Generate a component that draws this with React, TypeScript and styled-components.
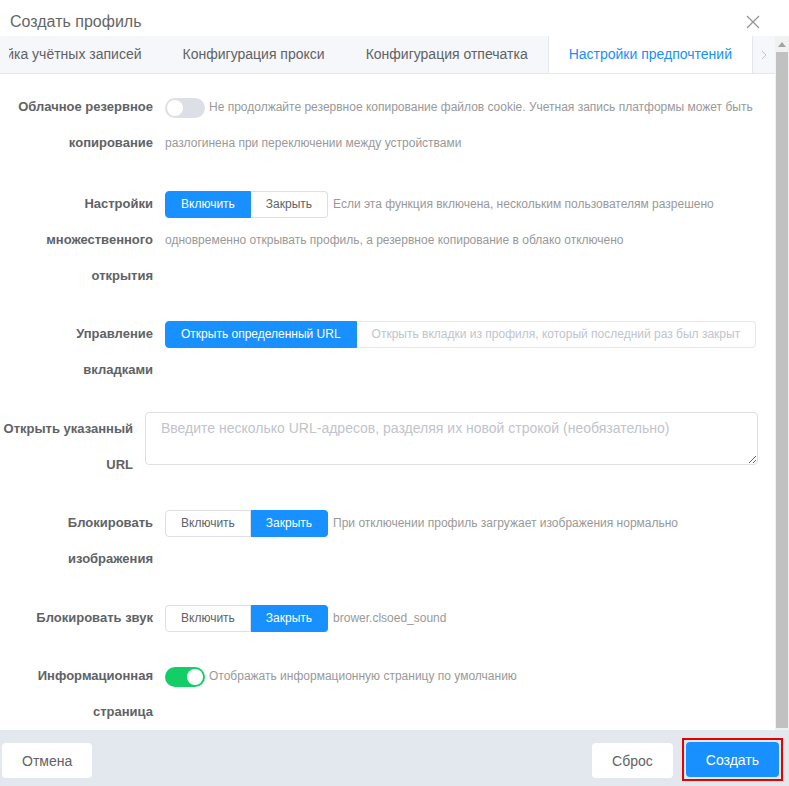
import React from "react";
import styled, { createGlobalStyle } from "styled-components";

const tabs = [
  "Настройка учётных записей",
  "Конфигурация прокси",
  "Конфигурация отпечатка",
  "Настройки предпочтений",
];

const App: React.FC = () => {
  return (
    <>
      <GlobalStyle />
      <Dialog>
        <Header>
          <Title>Создать профиль</Title>
          <CloseButton aria-label="close">
            <svg width="14" height="14" viewBox="0 0 14 14">
              <path d="M1 1L13 13M13 1L1 13" stroke="#909399" strokeWidth="1.2" fill="none" />
            </svg>
          </CloseButton>
        </Header>

        <Main>
          <ScrollArea>
            <TabBar>
              <TabStrip>
                {tabs.map((t, i) => (
                  <Tab key={t} $active={i === tabs.length - 1}>
                    {t}
                  </Tab>
                ))}
              </TabStrip>
              <TabArrow>
                <svg width="6" height="10" viewBox="0 0 6 10">
                  <path d="M1 1L5 5L1 9" stroke="#c0c4cc" strokeWidth="1" fill="none" />
                </svg>
              </TabArrow>
            </TabBar>

            <Form>
              <FormItem>
                <Label>{"Облачное резервное\nкопирование"}</Label>
                <Content>
                  <Switch $on={false}>
                    <Knob />
                  </Switch>
                  <Desc>
                    Не продолжайте резервное копирование файлов cookie. Учетная запись платформы может быть
                    разлогинена при переключении между устройствами
                  </Desc>
                </Content>
              </FormItem>

              <FormItem>
                <Label>{"Настройки\nмножественного\nоткрытия"}</Label>
                <Content>
                  <Segmented>
                    <Seg $active>Включить</Seg>
                    <Seg>Закрыть</Seg>
                  </Segmented>
                  <Desc $gap>
                    Если эта функция включена, нескольким пользователям разрешено одновременно открывать
                    профиль, а резервное копирование в облако отключено
                  </Desc>
                </Content>
              </FormItem>

              <FormItem>
                <Label>{"Управление\nвкладками"}</Label>
                <Content>
                  <Segmented>
                    <Seg $active>Открыть определенный URL</Seg>
                    <Seg $disabled>Открыть вкладки из профиля, который последний раз был закрыт</Seg>
                  </Segmented>
                </Content>
              </FormItem>

              <FormItem>
                <Label $width={145}>{"Открыть указанный\nURL"}</Label>
                <Content>
                  <UrlInput placeholder="Введите несколько URL-адресов, разделяя их новой строкой (необязательно)" />
                </Content>
              </FormItem>

              <FormItem>
                <Label>{"Блокировать\nизображения"}</Label>
                <Content>
                  <Segmented>
                    <Seg>Включить</Seg>
                    <Seg $active>Закрыть</Seg>
                  </Segmented>
                  <Desc $gap>При отключении профиль загружает изображения нормально</Desc>
                </Content>
              </FormItem>

              <FormItem>
                <Label>Блокировать звук</Label>
                <Content>
                  <Segmented>
                    <Seg>Включить</Seg>
                    <Seg $active>Закрыть</Seg>
                  </Segmented>
                  <Desc $gap>brower.clsoed_sound</Desc>
                </Content>
              </FormItem>

              <FormItem>
                <Label>{"Информационная\nстраница"}</Label>
                <Content>
                  <Switch $on>
                    <Knob />
                  </Switch>
                  <Desc>Отображать информационную страницу по умолчанию</Desc>
                </Content>
              </FormItem>
            </Form>
          </ScrollArea>

          <ScrollTrack>
            <ScrollArrow>
              <svg width="8" height="5" viewBox="0 0 8 5">
                <path d="M0 5L4 0L8 5Z" fill="#a3a3a3" />
              </svg>
            </ScrollArrow>
            <ScrollThumb />
          </ScrollTrack>
        </Main>

        <Footer>
          <FooterButton>Отмена</FooterButton>
          <FooterButton $push>Сброс</FooterButton>
          <Highlight>
            <FooterButton $primary>Создать</FooterButton>
          </Highlight>
        </Footer>
      </Dialog>
    </>
  );
};

export default App;

const GlobalStyle = createGlobalStyle`
  html, body {
    margin: 0;
    padding: 0;
    background: #fff;
  }
  body {
    font-family: "Liberation Sans", Arial, sans-serif;
  }
  *, *::before, *::after {
    box-sizing: border-box;
  }
`;

const Dialog = styled.div`
  display: flex;
  flex-direction: column;
  width: 789px;
  height: 786px;
  background: #fff;
  overflow: hidden;
`;

const Header = styled.div`
  display: flex;
  align-items: center;
  justify-content: space-between;
  height: 36px;
  padding: 10px 29px 2px 10px;
`;

const Title = styled.div`
  font-size: 16px;
  line-height: 24px;
  color: #666;
`;

const CloseButton = styled.button`
  display: flex;
  padding: 0;
  border: 0;
  background: none;
  cursor: pointer;
`;

const Main = styled.div`
  display: flex;
  flex: 1;
  min-height: 0;
`;

const ScrollArea = styled.div`
  display: flex;
  flex-direction: column;
  flex: 1;
  min-width: 0;
  overflow: hidden;
`;

const TabBar = styled.div`
  display: flex;
  height: 38px;
  background: #f5f7fa;
  border-bottom: 1px solid #e4e7ed;
`;

const TabStrip = styled.div`
  display: flex;
  flex: 1;
  min-width: 0;
  margin-left: 9px;
  justify-content: flex-end;
  overflow: hidden;
`;

const Tab = styled.div<{ $active?: boolean }>`
  flex: none;
  padding: 0 20px;
  margin-bottom: -1px;
  font-size: 14px;
  line-height: 37px;
  white-space: nowrap;
  color: ${(p) => (p.$active ? "#1890ff" : "#606266")};
  background: ${(p) => (p.$active ? "#fff" : "transparent")};
  border-left: 1px solid ${(p) => (p.$active ? "#e4e7ed" : "transparent")};
`;

const TabArrow = styled.div`
  display: flex;
  align-items: center;
  justify-content: center;
  width: 23px;
  flex: none;
  border-left: 1px solid #e4e7ed;
`;

const Form = styled.div`
  padding: 15px 17px 0 0;
`;

const FormItem = styled.div`
  display: flex;
  margin-bottom: 22.5px;

  &:first-child {
    margin-bottom: 24.5px;
  }
  &:last-child {
    margin-bottom: 0;
  }
`;

const Label = styled.div<{ $width?: number }>`
  flex: none;
  width: ${(p) => p.$width ?? 165}px;
  padding-right: 12px;
  text-align: right;
  white-space: pre-line;
  font-size: 13px;
  font-weight: bold;
  line-height: 36px;
  color: #606266;
`;

const Content = styled.div`
  flex: 1;
  min-width: 0;
  font-size: 12px;
  line-height: 36px;
`;

const Desc = styled.span<{ $gap?: boolean }>`
  color: #999;
  font-size: 12px;
  margin-left: ${(p) => (p.$gap ? "5px" : "0")};
`;

const Switch = styled.span<{ $on?: boolean }>`
  display: inline-flex;
  align-items: center;
  justify-content: ${(p) => (p.$on ? "flex-end" : "flex-start")};
  vertical-align: middle;
  width: 40px;
  height: 20px;
  padding: 2px;
  margin-right: 4px;
  border-radius: 10px;
  background: ${(p) => (p.$on ? "#13ce66" : "#dcdfe6")};
`;

const Knob = styled.span`
  width: 16px;
  height: 16px;
  border-radius: 50%;
  background: #fff;
`;

const Segmented = styled.span`
  display: inline-flex;
  vertical-align: middle;
  height: 27px;
`;

const Seg = styled.span<{ $active?: boolean; $disabled?: boolean }>`
  display: block;
  padding: 0 15px;
  font-size: 12px;
  line-height: 25px;
  white-space: nowrap;
  border: 1px solid ${(p) => (p.$active ? "#1890ff" : p.$disabled ? "#e4e7ed" : "#dcdfe6")};
  background: ${(p) => (p.$active ? "#1890ff" : "#fff")};
  color: ${(p) => (p.$active ? "#fff" : p.$disabled ? "#c0c4cc" : "#606266")};

  &:first-child {
    border-radius: 4px 0 0 4px;
  }
  &:last-child {
    border-left-width: 0;
    border-radius: 0 4px 4px 0;
  }
`;

const UrlInput = styled.textarea`
  display: block;
  width: 100%;
  height: 53px;
  margin-top: 1.5px;
  padding: 5px 15px;
  font-family: inherit;
  font-size: 14px;
  line-height: 21px;
  color: #606266;
  border: 1px solid #dcdfe6;
  border-radius: 4px;
  resize: vertical;
  outline: none;

  &::placeholder {
    color: #c0c4cc;
  }
`;

const ScrollTrack = styled.div`
  display: flex;
  flex-direction: column;
  flex: none;
  width: 14px;
  background: #f1f1f1;
`;

const ScrollArrow = styled.div`
  display: flex;
  align-items: center;
  justify-content: center;
  height: 16px;
  flex: none;
`;

const ScrollThumb = styled.div`
  flex: 1;
  margin: 0 1px 2px 1px;
  background: #c1c1c1;
`;

const Footer = styled.div`
  display: flex;
  align-items: flex-start;
  height: 56px;
  flex: none;
  padding: 13px 6px 0 2px;
  background: #e3e7ee;
`;

const Highlight = styled.div`
  display: flex;
  margin: -5px 0 0 9px;
  padding: 2px;
  border: 2px solid #e60000;
`;

const FooterButton = styled.button<{ $primary?: boolean; $push?: boolean }>`
  height: 35px;
  padding: 0 20px;
  margin-left: ${(p) => (p.$push ? "auto" : "0")};
  font-family: inherit;
  font-size: 14px;
  border: 0;
  border-radius: 4px;
  background: ${(p) => (p.$primary ? "#1890ff" : "#fff")};
  color: ${(p) => (p.$primary ? "#fff" : "#606266")};
  cursor: pointer;
`;
